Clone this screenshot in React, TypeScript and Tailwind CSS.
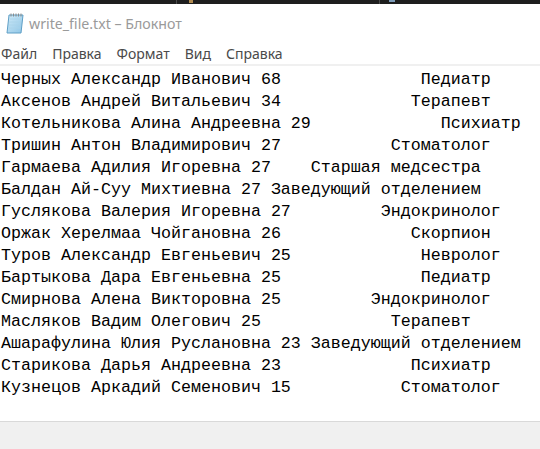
import React from "react";

const rows: [string, string][] = [
  ["Черных Александр Иванович 68", "Педиатр"],
  ["Аксенов Андрей Витальевич 34", "Терапевт"],
  ["Котельникова Алина Андреевна 29", "Психиатр"],
  ["Тришин Антон Владимирович 27", "Стоматолог"],
  ["Гармаева Адилия Игоревна 27", "Старшая медсестра"],
  ["Балдан Ай-Суу Михтиевна 27", "Заведующий отделением"],
  ["Гуслякова Валерия Игоревна 27", "Эндокринолог"],
  ["Оржак Херелмаа Чойгановна 26", "Скорпион"],
  ["Туров Александр Евгеньевич 25", "Невролог"],
  ["Бартыкова Дара Евгеньевна 25", "Педиатр"],
  ["Смирнова Алена Викторовна 25", "Эндокринолог"],
  ["Масляков Вадим Олегович 25", "Терапевт"],
  ["Ашарафулина Юлия Руслановна 23", "Заведующий отделением"],
  ["Старикова Дарья Андреевна 23", "Психиатр"],
  ["Кузнецов Аркадий Семенович 15", "Стоматолог"],
];

const menu = ["Файл", "Правка", "Формат", "Вид", "Справка"];

function NotepadIcon() {
  return (
    <svg width="20" height="22" viewBox="0 0 20 22" className="shrink-0">
      <defs>
        <linearGradient id="pg" x1="0" y1="0" x2="1" y2="1">
          <stop offset="0" stopColor="#cfeaf8" />
          <stop offset="1" stopColor="#8fc6e6" />
        </linearGradient>
      </defs>
      <path d="M4 3 L18 3 L16 21 L2 21 Z" fill="url(#pg)" stroke="#5f9fc6" strokeWidth="1" />
      <path d="M5 7 L16 7 M4.6 10 L15.6 10 M4.3 13 L15.3 13 M4 16 L15 16" stroke="#a9d3ea" strokeWidth="0.8" />
      <path d="M6 1.5 v3 M8.5 1.5 v3 M11 1.5 v3 M13.5 1.5 v3 M16 1.5 v3" stroke="#8a8a8a" strokeWidth="1" />
    </svg>
  );
}

export default function App() {
  return (
    <div className="w-[540px] h-[449px] flex flex-col bg-white overflow-hidden">
      {/* windows behind */}
      <div className="h-[4px] bg-[#1e1e1e] flex shrink-0">
        <div className="w-[176px]" />
        <div className="w-px bg-[#4a4a4a]" />
        <div className="w-[12px]" />
        <div className="w-[4px] h-[3px] bg-[#b08a50]" />
        <div className="w-[186px]" />
        <div className="w-px bg-[#4a4a4a]" />
        <div className="w-[9px]" />
        <div className="w-[6px] h-[2px] bg-[#7d9bb8]" />
      </div>

      {/* title bar */}
      <div className="h-[34px] flex items-center pl-[5px] pt-[4px] gap-[4px] shrink-0" style={{ fontFamily: '"Noto Sans", "Open Sans", sans-serif' }}>
        <NotepadIcon />
        <span className="text-[14.2px] text-[#9a9a9a] leading-none mt-[2px]">write_file.txt – Блокнот</span>
      </div>

      {/* menu bar */}
      <div className="h-[26px] flex items-center gap-[15px] pl-[1px] pt-[4px] shrink-0 text-[14px] text-[#4a4a4a]" style={{ fontFamily: '"Noto Sans", "Open Sans", sans-serif' }}>
        {menu.map((m) => (
          <span key={m}>{m}</span>
        ))}
      </div>
      <div className="h-[2px] bg-[#f0f0f0] shrink-0" />

      {/* text area */}
      <div
        className="flex-1 pt-[3px] pl-[1px] text-[16.67px] leading-[22px] text-black whitespace-pre"
        style={{ fontFamily: '"Liberation Mono", monospace' }}
      >
        {rows.map(([name, job]) => (
          <div key={name}>{name + " " + job.padStart(20, " ")}</div>
        ))}
      </div>

      {/* status area */}
      <div className="h-px bg-[#d9d9d9] shrink-0" />
      <div className="h-[27px] bg-[#f0f0f0] shrink-0" />
    </div>
  );
}
